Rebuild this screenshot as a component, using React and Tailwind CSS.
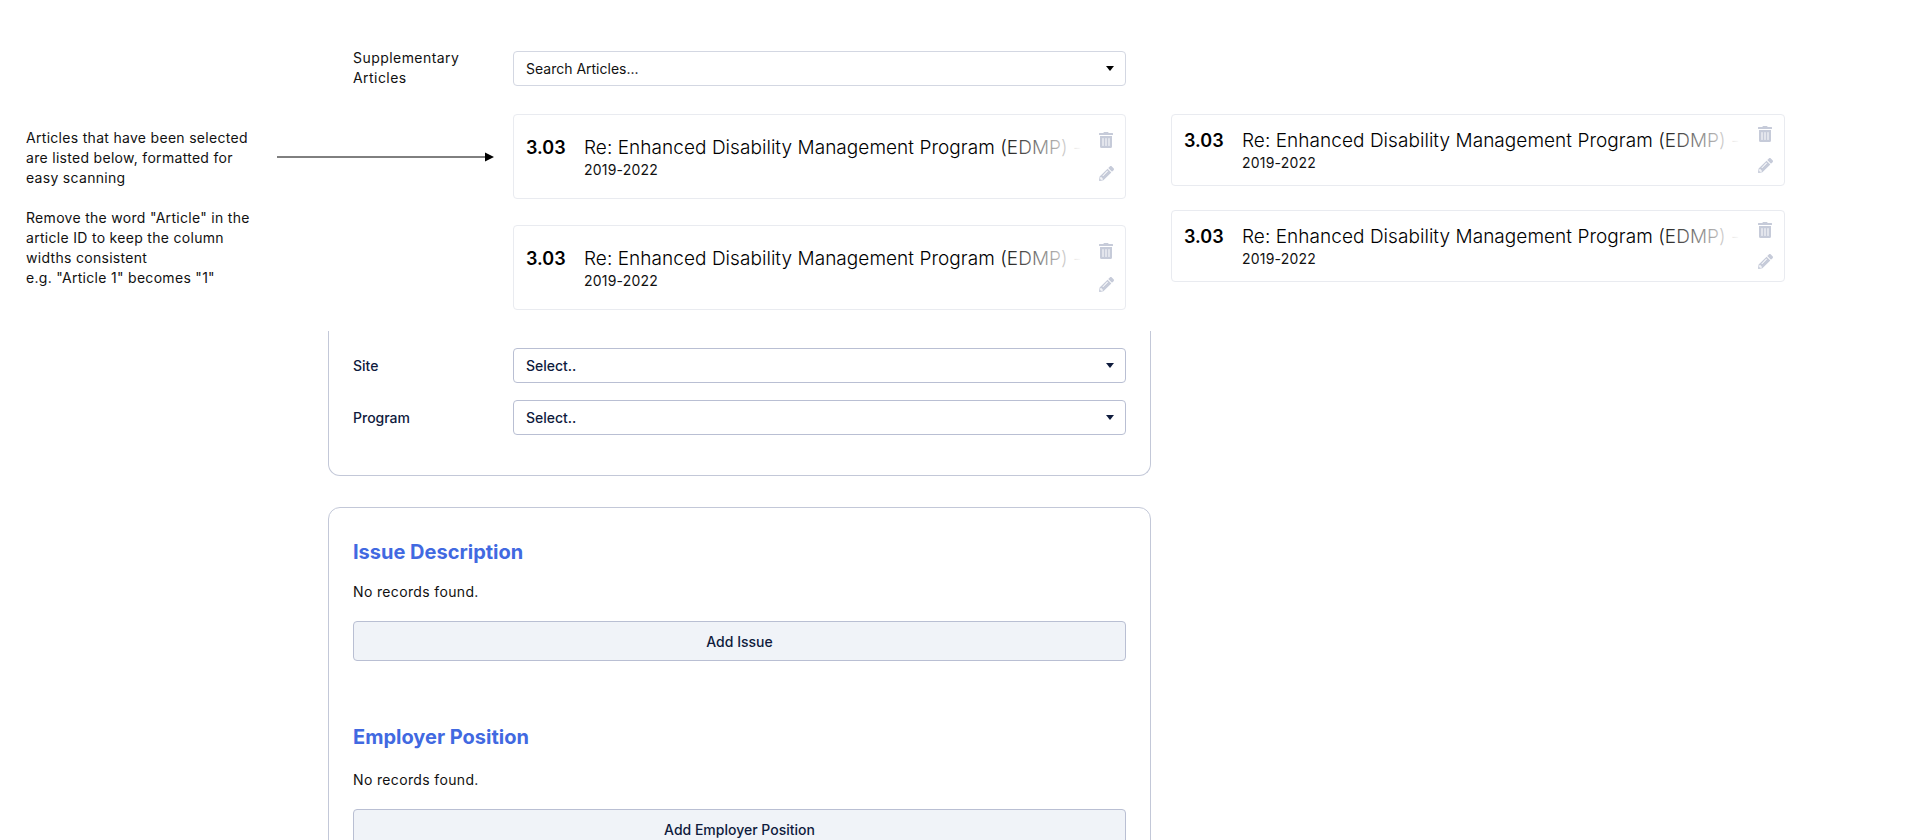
import { FaTrashAlt, FaPencilAlt } from "react-icons/fa";

function Caret({ dark }) {
    return <span className={`w-0 h-0 border-x-[4px] border-x-transparent border-t-[5px] ${dark ? "border-t-[#0f1b3d]" : "border-t-black"}`} />;
}

function Select({ text, dark, light }) {
    return (
        <div className={`flex-1 h-[35px] flex items-center justify-between pl-[12px] pr-[11px] rounded-[4px] bg-white text-[14px] ${light ? "border-[1.5px] border-[#d3d7e2] text-[#111]" : "border border-[#b9bfd3] text-[#0f1b3d] font-medium"}`}>
            <span>{text}</span>
            <Caret dark={dark} />
        </div>
    );
}

function ArticleCard({ tall }) {
    return (
        <div className={`flex border border-[#e9ebf0] rounded-[4px] pl-[12px] pr-[11px] bg-white ${tall ? "h-[85px] pt-[19px]" : "h-[72px] pt-[12px]"}`}>
            <div className="w-[58px] text-[18px] leading-[27px] font-semibold text-black shrink-0">3.03</div>
            <div className="flex-1 min-w-0">
                <div className="relative overflow-hidden whitespace-nowrap text-[19px] leading-[27px] font-light text-black w-[498px] tracking-[0.05px]">
                    Re: Enhanced Disability Management Program (EDMP) - Supplementary Article
                    <div className="absolute inset-y-0 right-0 w-[85px] bg-gradient-to-r from-transparent to-white" />
                </div>
                <div className="text-[14px] leading-[18px] text-[#111] tracking-[0.2px]">2019-2022</div>
            </div>
            <div className={`w-[16px] flex flex-col items-center text-[#c6cbd9] shrink-0 ${tall ? "gap-[18px] -mt-[2px]" : "gap-[16px] -mt-[1px]"}`}>
                <FaTrashAlt size={16} />
                <FaPencilAlt size={15} />
            </div>
        </div>
    );
}

function Row({ label, children }) {
    return (
        <div className="flex items-center">
            <div className="w-[160px] text-[14px] leading-[20px] text-[#0f1b3d] font-medium shrink-0">{label}</div>
            {children}
        </div>
    );
}

function AddBlock({ title, button, mt, gap }) {
    return (
        <div className={mt}>
            <h2 className="text-[20px] leading-[30px] font-bold text-[#4169e1]">{title}</h2>
            <p className={`${gap} text-[14px] leading-[20px] text-[#111] tracking-[0.35px]`}>No records found.</p>
            <button className="mt-[19px] w-full h-[40px] rounded-[4px] border border-[#b9bfd3] bg-[#f0f3f8] text-[14px] font-medium text-[#0f1b3d]">{button}</button>
        </div>
    );
}

export default function App() {
    return (
        <div className="h-[840px] overflow-hidden bg-white flex font-['Inter',sans-serif]">
            {/* Notes */}
            <div className="relative w-[328px] shrink-0 pl-[26px] pt-[128px] text-[14px] leading-[20px] text-[#111] tracking-[0.3px]">
                <p className="w-[228px]">Articles that have been selected are listed below, formatted for easy scanning</p>
                <p className="w-[228px] mt-[20px]">
                    Remove the word "Article" in the article ID to keep the column widths consistent
                    <br />
                    e.g. "Article 1" becomes "1"
                </p>
                <svg className="absolute left-[277px] top-[151px] z-10" width="217" height="12" viewBox="0 0 217 12">
                    <path d="M0 6H210" stroke="#000" strokeWidth="1" />
                    <path d="M208 1.5L217 6L208 10.5Z" fill="#000" />
                </svg>
            </div>

            {/* Form */}
            <div className="w-[823px] shrink-0">
                <div className="pt-[51px] pl-[25px] pr-[25px] h-[331px]">
                    <div className="flex items-start">
                        <div className="w-[160px] text-[14px] leading-[20px] text-[#111] shrink-0 -mt-[3px] tracking-[0.45px]">Supplementary<br />Articles</div>
                        <Select text="Search Articles..." light />
                    </div>
                    <div className="ml-[160px] mt-[26px] flex flex-col gap-[26px]">
                        <ArticleCard tall />
                        <ArticleCard tall />
                    </div>
                </div>

                <div className="h-[145px] border-x border-b border-[#c3c8d8] rounded-b-[12px] pt-[17px] px-[24px] flex flex-col gap-[17px]">
                    <Row label="Site"><Select text="Select.." dark /></Row>
                    <Row label="Program"><Select text="Select.." dark /></Row>
                </div>

                <div className="mt-[31px] border border-[#c3c8d8] rounded-[12px] px-[24px] pt-[29px] h-[400px]">
                    <AddBlock title="Issue Description" button="Add Issue" gap="mt-[15px]" />
                    <AddBlock title="Employer Position" button="Add Employer Position" mt="mt-[61px]" gap="mt-[18px]" />
                </div>
            </div>

            {/* Compact variant */}
            <div className="w-[614px] ml-[20px] pt-[114px] flex flex-col gap-[24px] shrink-0 self-start">
                <ArticleCard />
                <ArticleCard />
            </div>
        </div>
    );
}
